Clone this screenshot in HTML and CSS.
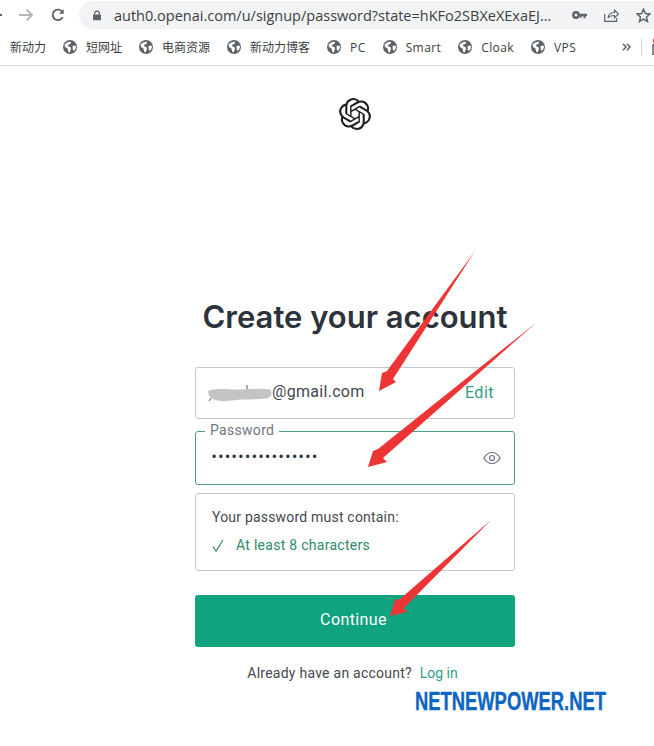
FILE: index.html
```html
<!DOCTYPE html>
<html lang="en">
<head>
<meta charset="UTF-8" />
<meta name="viewport" content="width=device-width, initial-scale=1" />
<title>Create your account</title>
<link rel="stylesheet" href="styles.css">
</head>
<body>
<svg width="0" height="0" class="defs">
  <symbol id="globe" viewBox="0 0 14 14">
    <circle cx="7" cy="7" r="7" fill="#5f6368"/>
    <path d="M1.500 4.500L5 2L8 1.800L7.500 4L5.500 4.600L5 6.200L7.500 7L8 9L6.500 12.500L5.200 11.800L4.500 8.600L2 7Z" fill="#fff"/>
    <path d="M9.500 6L12.600 5.600L13 8L10.800 11L9.800 9.400Z" fill="#fff"/>
  </symbol>
</svg>

<header class="toolbar">
  <span class="back-edge"></span>
  <svg class="nav-icon forward" width="16" height="14" viewBox="0 0 16 14"><path d="M1 7h13M8.500 1.500L14 7l-5.500 5.500" fill="none" stroke="#b4b6b9" stroke-width="1.800"/></svg>
  <svg class="nav-icon reload" width="14" height="14" viewBox="0 0 16 16"><path d="M13.300 10.500A6 6 0 1 1 13 4.600" fill="none" stroke="#5f6368" stroke-width="2.100"/><path d="M14.500 1v5.500H9z" fill="#5f6368"/></svg>
  <div class="omnibox">
    <svg class="lock" width="8" height="11" viewBox="0 0 10 12"><path d="M2 5V3.500a3 3 0 0 1 6 0V5" fill="none" stroke="#5f6368" stroke-width="1.500"/><rect y="4.800" width="10" height="7.200" rx="1" fill="#5f6368"/></svg>
    <span class="url">auth0.openai.com/u/signup/password?state=hKFo2SBXeXExaEJ...</span>
    <svg class="omni-icon key" width="15" height="8" viewBox="0 0 15 8"><circle cx="4" cy="4" r="2.700" fill="none" stroke="#5f6368" stroke-width="2.400"/><path d="M6 2.800h9v2.400h-1.500v2h-2v-2H9.500v1.500H8V5.200H6z" fill="#5f6368"/></svg>
    <svg class="omni-icon share" width="15" height="14" viewBox="0 0 15 14"><path d="M.7 6v7.300h12V10" fill="none" stroke="#5f6368" stroke-width="1.200"/><path d="M4 10c.5-3.500 3-5.500 6.500-5.500V2l4 4-4 4V7.500C8 7.500 5.500 8 4 10z" fill="none" stroke="#5f6368" stroke-width="1.100"/></svg>
    <svg class="omni-icon star" width="15" height="15" viewBox="0 0 15 15"><path d="M7.500 1.300l1.900 4.200 4.500.5-3.400 3 1 4.500-4-2.300-4 2.300 1-4.500-3.400-3 4.500-.5z" fill="none" stroke="#5f6368" stroke-width="1.500"/></svg>
  </div>
</header>

<nav class="bookmarks">
  <span class="bookmark">新动力</span>
  <span class="bookmark"><svg width="14" height="14"><use href="#globe"/></svg>短网址</span>
  <span class="bookmark"><svg width="14" height="14"><use href="#globe"/></svg>电商资源</span>
  <span class="bookmark"><svg width="14" height="14"><use href="#globe"/></svg>新动力博客</span>
  <span class="bookmark latin"><svg width="14" height="14"><use href="#globe"/></svg>PC</span>
  <span class="bookmark latin"><svg width="14" height="14"><use href="#globe"/></svg>Smart</span>
  <span class="bookmark latin"><svg width="14" height="14"><use href="#globe"/></svg>Cloak</span>
  <span class="bookmark latin"><svg width="14" height="14"><use href="#globe"/></svg>VPS</span>
  <svg class="more" width="9" height="8" viewBox="0 0 9 8"><path d="M1 .8L4 4 1 7.200M5 .8L8 4 5 7.200" fill="none" stroke="#5f6368" stroke-width="1.600"/></svg>
  <span class="divider"></span>
  <svg class="folder" width="9" height="18" viewBox="0 0 9 18"><rect x="1" y="8" width="8" height="10" fill="none" stroke="#5f6368" stroke-width="1.500"/><circle cx="4.500" cy="4" r="3.500" fill="#e03127"/></svg>
</nav>

<main class="signup">
  <svg class="logo" width="32" height="32" viewBox="0 0 24 24"><path fill="#202123" d="M22.2819 9.8211a5.9847 5.9847 0 0 0-.5157-4.9108 6.0462 6.0462 0 0 0-6.5098-2.9A6.0651 6.0651 0 0 0 4.9807 4.1818a5.9847 5.9847 0 0 0-3.9977 2.9 6.0462 6.0462 0 0 0 .7427 7.0966 5.98 5.98 0 0 0 .511 4.9107 6.051 6.051 0 0 0 6.5146 2.9001A5.9847 5.9847 0 0 0 13.2599 24a6.0557 6.0557 0 0 0 5.7718-4.2058 5.9894 5.9894 0 0 0 3.9977-2.9001 6.0557 6.0557 0 0 0-.7475-7.0729zm-9.022 12.6081a4.4755 4.4755 0 0 1-2.8764-1.0408l.1419-.0804 4.7783-2.7582a.7948.7948 0 0 0 .3927-.6813v-6.7369l2.02 1.1686a.071.071 0 0 1 .038.052v5.5826a4.504 4.504 0 0 1-4.4945 4.4944zm-9.6607-4.1254a4.4708 4.4708 0 0 1-.5346-3.0137l.142.0852 4.783 2.7582a.7712.7712 0 0 0 .7806 0l5.8428-3.3685v2.3324a.0804.0804 0 0 1-.0332.0615L9.74 19.9502a4.4992 4.4992 0 0 1-6.1408-1.6464zM2.3408 7.8956a4.485 4.485 0 0 1 2.3655-1.9728V11.6a.7664.7664 0 0 0 .3879.6765l5.8144 3.3543-2.0201 1.1685a.0757.0757 0 0 1-.071 0l-4.8303-2.7865A4.504 4.504 0 0 1 2.3408 7.872zm16.5963 3.8558L13.1038 8.364 15.1192 7.2a.0757.0757 0 0 1 .071 0l4.8303 2.7913a4.4944 4.4944 0 0 1-.6765 8.1042v-5.6772a.79.79 0 0 0-.407-.667zm2.0107-3.0231l-.142-.0852-4.7735-2.7818a.7759.7759 0 0 0-.7854 0L9.409 9.2297V6.8974a.0662.0662 0 0 1 .0284-.0615l4.8303-2.7866a4.4992 4.4992 0 0 1 6.6802 4.66zM8.3065 12.863l-2.02-1.1638a.0804.0804 0 0 1-.038-.0567V6.0742a4.4992 4.4992 0 0 1 7.3757-3.4537l-.142.0805L8.704 5.459a.7948.7948 0 0 0-.3927.6813zm1.0976-2.3654l2.602-1.4998 2.6069 1.4998v2.9994l-2.5974 1.4997-2.6067-1.4997Z"/></svg>

  <h1>Create your account</h1>

  <div class="field email-field">
    <span class="email"><svg class="redacted" width="64" height="18" viewBox="0 0 64 18"><path d="M39 1v4M3 14l-2 3" stroke="#555" stroke-width="1" fill="none"/><path d="M0 7C8 3.500 20 6 32 5.500S54 4 62 5.500C65 9 63 14 58 14.500C46 16 36 15 24 16.500S4 16 1 12Z" fill="#c4c4c4"/></svg>@gmail.com</span>
    <a href="#" class="edit">Edit</a>
  </div>

  <div class="field password-field">
    <label class="floating">Password</label>
    <span class="dots">••••••••••••••••</span>
    <svg class="eye" width="18" height="14" viewBox="0 0 18 14"><path d="M.8 7C3 3.300 5.800 1.500 9 1.500S15 3.300 17.200 7C15 10.700 12.200 12.500 9 12.500S3 10.700.8 7z" fill="none" stroke="#6e6e80" stroke-width="1.200"/><circle cx="9" cy="7" r="2.500" fill="none" stroke="#6e6e80" stroke-width="1.200"/></svg>
  </div>

  <div class="rules">
    <p class="rule-title">Your password must contain:</p>
    <p class="rule-ok"><svg width="12" height="13" viewBox="0 0 12 13"><path d="M1 7.500l3 4.500L11 1" fill="none" stroke="#2e8b6a" stroke-width="1.200"/></svg>At least 8 characters</p>
  </div>

  <button type="button" class="continue">Continue</button>

  <p class="login">Already have an account? <a href="#">Log in</a></p>
</main>

<div class="watermark">NETNEWPOWER.NET</div>

<svg class="arrows" width="654" height="746" viewBox="0 0 654 746">
  <path d="M475 251L393 379L396 382L379 391L382 373L387 371Z" fill="#ee3535"/>
  <path d="M537 322L383 458L387 462L368 467L373 451L378 449Z" fill="#ee3535"/>
  <path d="M491 520L404 608L407 612L390 616L395 600L400 599Z" fill="#ee3535"/>
</svg>
</body>
</html>
```

FILE: styles.css
```css
* {
  box-sizing: border-box;
}
body {
  margin: 0;
  height: 746px;
  overflow: hidden;
  position: relative;
  background: #fff;
  font-family: 'Inter', 'Roboto', sans-serif;
  color: #2d333a;
}
.defs {
  position: absolute;
}

/* Browser bar */
.toolbar {
  height: 30px;
  display: flex;
  align-items: center;
}
.back-edge {
  width: 2px;
  height: 2px;
  background: #5f6368;
  margin-right: 16px;
}
.nav-icon {
  flex: none;
}
.reload {
  margin-left: 17px;
}
.omnibox {
  flex: 1;
  height: 28px;
  margin-left: 14px;
  padding-left: 14px;
  display: flex;
  align-items: center;
  background: #f1f3f4;
  border-radius: 14px 0 0 14px;
}
.url {
  margin-left: 13px;
  width: 454px;
  font-family: 'Open Sans', sans-serif;
  font-size: 14.500px;
  color: #3c4043;
  white-space: nowrap;
}
.key {
  margin-left: 4px;
}
.share {
  margin-left: 17px;
}
.star {
  margin-left: 17px;
}
.bookmarks {
  height: 36px;
  padding: 0 0 1px 10px;
  display: flex;
  align-items: center;
  gap: 17px;
  border-bottom: 1px solid #d8dadd;
  font-family: 'Open Sans', 'Noto Sans CJK SC', sans-serif;
  font-size: 12px;
  color: #3c4043;
  white-space: nowrap;
}
.bookmark {
  display: flex;
  align-items: center;
  gap: 9px;
}
.latin {
  letter-spacing: 0.400px;
}
.more {
  flex: none;
  margin-left: 29px;
}
.divider {
  flex: none;
  width: 1px;
  height: 17px;
  background: #d0d2d5;
  margin-left: -7px;
}
.folder {
  flex: none;
  margin-left: -7px;
  margin-top: -3px;
}

/* Signup form */
.signup {
  width: 320px;
  margin-left: 195px;
  display: flex;
  flex-direction: column;
}
.logo {
  align-self: center;
  margin-top: 32px;
}
h1 {
  margin: 167px 0 30px;
  font-size: 31px;
  line-height: 40px;
  font-weight: 600;
  text-align: center;
  white-space: nowrap;
}
.field {
  position: relative;
  display: flex;
  align-items: center;
  justify-content: space-between;
  border-radius: 3px;
  font-family: 'Roboto', sans-serif;
  font-size: 16px;
  letter-spacing: 0.300px;
  color: #45484f;
}
.email-field {
  height: 52px;
  padding: 0 20px 2px 12px;
  border: 1px solid #c2c8d0;
}
.redacted {
  vertical-align: -5px;
}
.edit {
  letter-spacing: 0.500px;
  color: #2f9d84;
  text-decoration: none;
}
.password-field {
  height: 54px;
  margin-top: 12px;
  padding: 0 13px 0 16px;
  border: 1px solid #4a9e8a;
}
.floating {
  position: absolute;
  left: 9px;
  top: -10px;
  padding: 0 5px;
  background: #fff;
  font-size: 14px;
  line-height: 16px;
  color: #6f7780;
}
.dots {
  margin-top: -3px;
  font-family: 'Liberation Sans', sans-serif;
  font-size: 12px;
  letter-spacing: 2.500px;
  color: #2d333a;
}
.rules {
  height: 78px;
  margin-top: 8px;
  padding: 15px 16px;
  border: 1px solid #c2c8d0;
  border-radius: 3px;
  font-family: 'Roboto', sans-serif;
  font-size: 14px;
  line-height: 16px;
  color: #45484f;
}
.rules p {
  margin: 0;
}
.rule-title {
  letter-spacing: 0.200px;
}
.rules .rule-ok {
  margin-top: 12px;
  display: flex;
  align-items: center;
  gap: 12px;
  letter-spacing: 0.280px;
  color: #2e8b6a;
}
.continue {
  height: 52px;
  margin-top: 24px;
  padding: 0 3px 4px 0;
  border: none;
  border-radius: 3px;
  background: #10a37f;
  color: #fff;
  font-family: 'Roboto', sans-serif;
  font-size: 16px;
  letter-spacing: 0.400px;
}
.login {
  margin: 18px 0 0;
  padding-right: 5px;
  text-align: center;
  font-family: 'Roboto', sans-serif;
  font-size: 14px;
  line-height: 16px;
  letter-spacing: 0.250px;
  color: #45484f;
}
.login a {
  margin-left: 4px;
  letter-spacing: 0;
  color: #2f9d84;
  text-decoration: none;
}

/* Overlays added on top of the screenshot */
.watermark {
  position: absolute;
  left: 415px;
  top: 686px;
  font-family: 'Liberation Sans', sans-serif;
  font-size: 25px;
  line-height: 30px;
  font-weight: 700;
  color: #0c66c2;
  white-space: nowrap;
  transform: scaleX(0.735);
  transform-origin: left center;
  -webkit-text-stroke: 0.400px #0c66c2;
}
.arrows {
  position: absolute;
  left: 0;
  top: 0;
  pointer-events: none;
}
```
